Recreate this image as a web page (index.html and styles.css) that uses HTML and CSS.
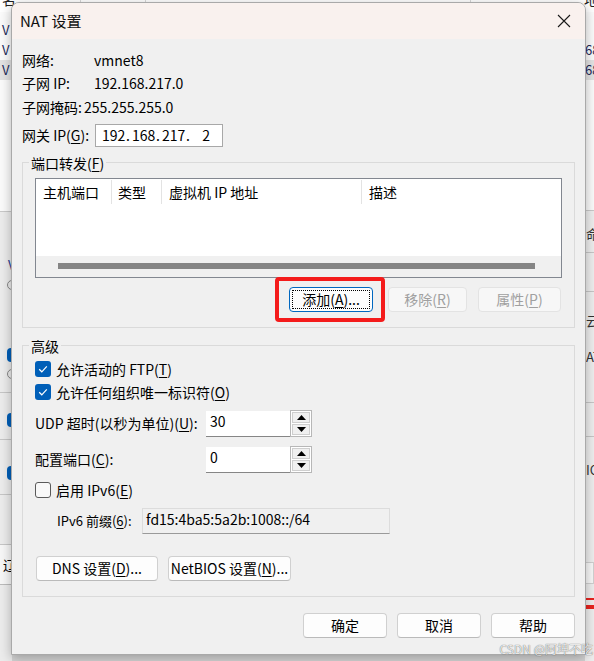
FILE: index.html
```html
<!DOCTYPE html>
<html lang="zh-CN">
<head>
<meta charset="utf-8">
<title>NAT 设置</title>
<link rel="stylesheet" href="styles.css">
</head>
<body>
<div class="backdrop">
  <div class="bg-top">
    <span class="bt-txt t1">名</span><span class="bt-sep s1"></span><span class="bt-sep s2"></span><span class="bt-sep s3"></span><span class="bt-txt t2">地</span>
  </div>
  <div class="bg-left">
    <div class="bl-white">
      <div class="bl-row">V</div>
      <div class="bl-row">V</div>
      <div class="bl-row sel">V</div>
    </div>
    <div class="bl-gray">
      <div class="frag f-v">V</div>
      <div class="frag f-radio"></div>
      <div class="frag f-blue b1"></div>
      <div class="frag f-radio r2"></div>
      <div class="frag f-line l1"></div>
      <div class="frag f-blue b2"></div>
      <div class="frag f-line l2"></div>
      <div class="frag f-blue b3"></div>
      <div class="frag f-line l3"></div>
      <div class="frag f-line l4"></div>
      <div class="frag f-box">辽</div>
    </div>
  </div>
  <div class="bg-right">
    <div class="br-white">
      <div class="br-row">68</div>
      <div class="br-row sel">68</div>
    </div>
    <div class="br-gray">
      <div class="frag g-t1">命</div>
      <div class="frag g-line gl1"></div>
      <div class="frag g-line gl2"></div>
      <div class="frag g-t2">云</div>
      <div class="frag g-t3">AT</div>
      <div class="frag g-line gl3"></div>
      <div class="frag g-line gl4"></div>
      <div class="frag g-t4">IC</div>
      <div class="frag g-btn"></div>
      <div class="frag g-red r1"></div>
      <div class="frag g-red r2"></div>
    </div>
  </div>
</div>

<div class="dialog">
  <div class="titlebar">
    <span class="title">NAT 设置</span>
    <svg class="close" width="14" height="14" viewBox="0 0 14 14"><path d="M1 1 L13 13 M13 1 L1 13" stroke="#1a1a1a" stroke-width="1.1" fill="none"/></svg>
  </div>
  <div class="content">
    <div class="info">
      <div class="irow"><span class="lbl w72">网络:</span><span>vmnet8</span></div>
      <div class="irow"><span class="lbl w72">子网 IP:</span><span>192.168.217.0</span></div>
      <div class="irow"><span class="lbl w62">子网掩码:</span><span>255.255.255.0</span></div>
      <div class="irow gw"><span class="lbl w73">网关 IP(<u>G</u>):</span><div class="ipbox"><span class="oct">192</span><span class="dot">.</span><span class="oct">168</span><span class="dot">.</span><span class="oct">217</span><span class="dot">.</span><span class="oct last">2</span></div></div>
    </div>

    <fieldset class="group g1">
      <legend>端口转发(<u>F</u>)</legend>
      <div class="inner g1-inner">
        <div class="listview">
          <div class="lv-head">
            <div class="col c1">主机端口</div>
            <div class="col c2">类型</div>
            <div class="col c3">虚拟机 IP 地址</div>
            <div class="col c4">描述</div>
          </div>
          <div class="lv-body"></div>
          <div class="hscroll"><div class="thumb"></div></div>
        </div>
        <div class="btnrow">
          <div class="hl-wrap">
            <button class="btn focus b-add"><span class="focus-rect">添加(<u>A</u>)...</span></button>
            <div class="redbox"></div>
          </div>
          <button class="btn disabled b-del">移除(<u>R</u>)</button>
          <button class="btn disabled b-prop">属性(<u>P</u>)</button>
        </div>
      </div>
    </fieldset>

    <fieldset class="group g2">
      <legend>高级</legend>
      <div class="inner g2-inner">
        <div class="chk-row"><span class="cb on"><svg width="16" height="16" viewBox="0 0 16 16"><path d="M4.2 8.3 L6.8 10.8 L11.8 5.4" stroke="#fff" stroke-width="1.2" fill="none"/></svg></span><span>允许活动的 FTP(<u>T</u>)</span></div>
        <div class="chk-row"><span class="cb on"><svg width="16" height="16" viewBox="0 0 16 16"><path d="M4.2 8.3 L6.8 10.8 L11.8 5.4" stroke="#fff" stroke-width="1.2" fill="none"/></svg></span><span>允许任何组织唯一标识符(<u>O</u>)</span></div>
        <div class="spin-row first">
          <span class="lbl w171">UDP 超时(以秒为单位)(<u>U</u>):</span>
          <div class="spinbox">
            <div class="spin-input">30</div>
            <div class="spinner">
              <div class="sbtn"><svg width="9" height="5" viewBox="0 0 9 5"><path d="M0 5 L4.5 0 L9 5 Z" fill="#000"/></svg></div>
              <div class="sbtn"><svg width="9" height="5" viewBox="0 0 9 5"><path d="M0 0 L4.5 5 L9 0 Z" fill="#000"/></svg></div>
            </div>
          </div>
        </div>
        <div class="spin-row second">
          <span class="lbl w171">配置端口(<u>C</u>):</span>
          <div class="spinbox">
            <div class="spin-input">0</div>
            <div class="spinner">
              <div class="sbtn"><svg width="9" height="5" viewBox="0 0 9 5"><path d="M0 5 L4.5 0 L9 5 Z" fill="#000"/></svg></div>
              <div class="sbtn"><svg width="9" height="5" viewBox="0 0 9 5"><path d="M0 0 L4.5 5 L9 0 Z" fill="#000"/></svg></div>
            </div>
          </div>
        </div>
        <div class="chk-row ipv6"><span class="cb off"></span><span>启用 IPv6(<u>E</u>)</span></div>
        <div class="prefix-row">
          <span class="lbl w85">IPv6 前缀(<u>6</u>):</span>
          <div class="prefix-input">fd15:4ba5:5a2b:1008::/64</div>
        </div>
        <div class="btnrow2">
          <button class="btn b-dns">DNS 设置(<u>D</u>)...</button>
          <button class="btn b-nb">NetBIOS 设置(<u>N</u>)...</button>
        </div>
      </div>
    </fieldset>

    <div class="footer">
      <button class="btn fbtn">确定</button>
      <button class="btn fbtn">取消</button>
      <button class="btn fbtn">帮助</button>
    </div>
  </div>
</div>

<div class="watermark">CSDN @阿坤不吃</div>
</body>
</html>
```

FILE: styles.css
```css
* { box-sizing: border-box; }
html, body { margin: 0; padding: 0; }
body {
  width: 594px;
  height: 661px;
  overflow: hidden;
  position: relative;
  background: #d5d5d5;
  font-family: "Noto Sans CJK SC", "Noto Sans", sans-serif;
  font-size: 14px;
  color: #000;
}
u { text-decoration: underline; text-underline-offset: 2px; }

/* ---------- backdrop window (partially hidden) ---------- */
.backdrop { position: absolute; inset: 0; overflow: hidden; }
.bg-top {
  position: absolute; left: 0; top: 0; width: 594px; height: 12px;
  background: #fff; overflow: hidden;
}
.bt-txt { position: absolute; top: -11px; font-size: 14px; color: #222; }
.bt-txt.t1 { left: 2px; }
.bt-txt.t2 { left: 584px; }
.bt-sep { position: absolute; top: 0; width: 1px; height: 12px; background: #d8d8d8; }
.bt-sep.s1 { left: 80px; }
.bt-sep.s2 { left: 145px; }
.bt-sep.s3 { left: 470px; }

.bg-left {
  position: absolute; left: 0; top: 12px; width: 12px; height: 649px;
  background: #ececec; display: flex; flex-direction: column; overflow: hidden;
}
.bl-white { height: 200px; background: #fbfbfb; border-bottom: 1px solid #c9c9c9; padding-top: 8px; }
.bl-row { height: 20px; line-height: 20px; padding-left: 2px; font-size: 13px; color: #1d2a5a; }
.bl-row.sel { background: #e3e3e3; }
.bl-gray { position: relative; flex: 1; }
.frag { position: absolute; }
.f-v { left: 8px; top: 43px; font-size: 13px; color: #2a3b8f; }
.f-radio { left: 7px; top: 68px; width: 10px; height: 10px; border: 1px solid #888; border-radius: 50%; }
.f-radio.r2 { top: 157px; }
.f-blue { left: 7px; width: 10px; height: 14px; border-radius: 4px; background: #005fb8; }
.f-blue.b1 { top: 136px; }
.f-blue.b2 { top: 201px; }
.f-blue.b3 { top: 254px; }
.f-line { left: 0; width: 12px; height: 1px; background: #c6c6c6; }
.f-line.l1 { top: 180px; }
.f-line.l2 { top: 227px; }
.f-line.l3 { top: 282px; }
.f-line.l4 { top: 332px; }
.f-box { left: 0; top: 333px; width: 12px; height: 40px; background: #f7f7f7; border-bottom: 1px solid #bbb; line-height: 40px; font-size: 13px; padding-left: 3px; overflow: hidden; }

.bg-right {
  position: absolute; left: 585px; top: 12px; width: 9px; height: 649px;
  background: #eeeeee; display: flex; flex-direction: column; overflow: hidden;
}
.br-white { height: 199px; background: #fbfbfb; border-bottom: 1px solid #c9c9c9; padding-top: 28px; }
.br-row { height: 20px; line-height: 20px; font-size: 13px; color: #1d2a5a; white-space: nowrap; overflow: hidden; }
.br-row.sel { background: #e3e3e3; }
.br-gray { position: relative; flex: 1; }
.g-t1, .g-t2, .g-t3, .g-t4 { left: 1px; font-size: 13px; color: #333; white-space: nowrap; }
.g-t1 { top: 13px; }
.g-t2 { top: 100px; }
.g-t3 { top: 136px; }
.g-t4 { top: 249px; }
.g-line { left: 0; width: 9px; height: 1px; background: #c6c6c6; }
.g-line.gl1 { top: 41px; }
.g-line.gl2 { top: 80px; }
.g-line.gl3 { top: 191px; }
.g-line.gl4 { top: 225px; }
.g-btn { left: 0; top: 351px; width: 9px; height: 22px; background: #f8f8f8; border: 1px solid #d0d0d0; }
.g-red { left: 0; width: 9px; background: #e8231f; }
.g-red.r1 { top: 387px; height: 2px; }
.g-red.r2 { top: 394px; height: 4px; }

/* ---------- dialog ---------- */
.dialog {
  position: absolute;
  left: 11px; top: 2px;
  width: 575px; height: 653px;
  background: #f0f0f0;
  border: 1px solid #a9a9a9;
  border-radius: 8px 8px 0 0;
  box-shadow: 0 3px 12px rgba(0,0,0,0.28);
  display: flex; flex-direction: column;
  overflow: hidden;
}
.titlebar {
  height: 36px;
  flex: none;
  background: #f9f1ee;
  display: flex; align-items: center; justify-content: space-between;
  padding: 0 14px 2px 8px;
}
.title { font-size: 15px; color: #111; }
.close { display: block; margin-top: 2px; }

.content { padding: 9px 10px 0 10px; display: flex; flex-direction: column; }

.info { display: flex; flex-direction: column; }
.irow { height: 23.5px; display: flex; align-items: center; white-space: nowrap; }
.irow.gw { height: 23px; margin-top: 5px; }
.lbl { flex: none; white-space: nowrap; }
.w72 { width: 72px; }
.w62 { width: 62px; }
.w73 { width: 73px; }
.w171 { width: 171px; }
.w85 { width: 85px; }

.ipbox {
  width: 128px; height: 23px;
  background: #fff;
  border: 1px solid #a8a8a8;
  display: flex; align-items: center;
  padding-left: 6px;
  font-size: 14px;
}
.oct { display: inline-block; width: 22px; text-align: center; }
.dot { display: inline-block; width: 8px; text-align: center; }
.oct.last { width: 18px; text-align: right; }

/* group boxes */
.group {
  margin: 0; padding: 0;
  border: 1px solid #dadada;
  min-width: 0;
}
.group legend {
  margin-left: 6px;
  padding: 0 2px;
  height: 18px; line-height: 18px;
  font-size: 14px;
}
.g1 { margin-top: 7px; }
.g2 { margin-top: 9px; }
.g1-inner { padding: 6px 12px 15px 12px; }
.g2-inner { padding: 3px 12px 15px 12px; }

/* list view */
.listview {
  height: 100px;
  border: 1px solid #828790;
  background: #fff;
  display: flex; flex-direction: column;
}
.lv-head { display: flex; height: 25px; padding-top: 1px; flex: none; }
.col { height: 24px; line-height: 24px; border-right: 1px solid #e3e3e3; padding-left: 7px; white-space: nowrap; }
.c1 { width: 76px; }
.c2 { width: 50px; padding-left: 6px; }
.c3 { width: 200px; }
.c4 { flex: 1; border-right: none; }
.lv-body { flex: 1; }
.hscroll { height: 21px; flex: none; background: #f0f0f0; padding: 7px 0 0 22px; }
.thumb { width: 477px; height: 6px; background: #858585; }

/* buttons */
.btn {
  font-family: inherit;
  font-size: 14px;
  color: #000;
  height: 25px;
  padding: 0;
  background: #fdfdfd;
  border: 1px solid #d0d0d0;
  border-bottom-color: #bababa;
  border-radius: 4px;
  display: flex; align-items: center; justify-content: center;
  white-space: nowrap;
}
.btn.disabled { background: #f7f7f7; border-color: #e3e3e3; color: #a0a0a0; }
.btn.focus { border: 1px solid #0067c0; padding: 2px; }
.focus-rect { flex: 1; align-self: stretch; border: 1px dotted #000; display: flex; align-items: center; justify-content: center; border-radius: 1px; }

.btnrow { display: flex; justify-content: flex-end; margin-top: 9px; padding-right: 1px; }
.hl-wrap { position: relative; }
.b-add { width: 84px; }
.b-del { width: 79px; margin-left: 15px; }
.b-prop { width: 83px; margin-left: 11px; }
.redbox {
  position: absolute;
  left: -14px; top: -10px; right: -12px; bottom: -10px;
  border: 4px solid #f41b1b;
  border-radius: 4px;
  pointer-events: none;
}

/* checkboxes */
.chk-row { display: flex; align-items: center; height: 23px; gap: 5px; white-space: nowrap; }
.chk-row.ipv6 { height: 22px; margin-top: 6px; }
.cb { width: 16px; height: 16px; border-radius: 3px; flex: none; display: block; }
.cb svg { display: block; }
.cb.on { background: #005fb8; }
.cb.off { border: 1px solid #5a5a5a; background: #f8f8f8; }

/* spin boxes */
.spin-row { display: flex; align-items: center; height: 27px; white-space: nowrap; }
.spin-row.first { margin-top: 6px; }
.spin-row.second { margin-top: 9px; }
.spinbox { display: flex; height: 27px; }
.spin-input {
  width: 84px; height: 26px; margin-top: 1px;
  background: #fff;
  border-bottom: 1px solid #868686;
  padding: 1px 4px;
  line-height: 18px;
}
.spinner {
  width: 22px; height: 27px;
  border: 1px solid #b7b7b7;
  padding: 1px;
  display: flex; flex-direction: column; gap: 1px;
  background: #fff;
}
.sbtn {
  flex: 1;
  background: #f0f0f0;
  border: 1px solid #cfcfcf;
  display: flex; align-items: center; justify-content: center;
}
.sbtn svg { display: block; }

/* ipv6 prefix */
.prefix-row { display: flex; align-items: center; height: 26px; margin-top: 7px; padding-left: 22px; white-space: nowrap; }
.prefix-row .lbl { font-size: 13px; }
.prefix-input {
  width: 248px; height: 26px;
  background: #f0f0f0;
  border: 1px solid #dcdcdc;
  border-bottom-color: #9a9a9a;
  padding: 0 3px;
  line-height: 20px;
}

.btnrow2 { display: flex; gap: 10px; margin-top: 22px; padding-left: 1px; }
.b-dns { width: 122px; }
.b-nb { width: 123px; }

.footer { display: flex; justify-content: flex-end; gap: 10px; margin-top: 16px; }
.fbtn { width: 84px; }

.watermark {
  position: absolute;
  right: 1px; bottom: 4px;
  font-size: 12px;
  color: rgba(255,255,255,0.85);
  text-shadow: 0 0 1px rgba(0,0,0,0.5), 0 0 1px rgba(0,0,0,0.3);
  white-space: nowrap;
}
```
